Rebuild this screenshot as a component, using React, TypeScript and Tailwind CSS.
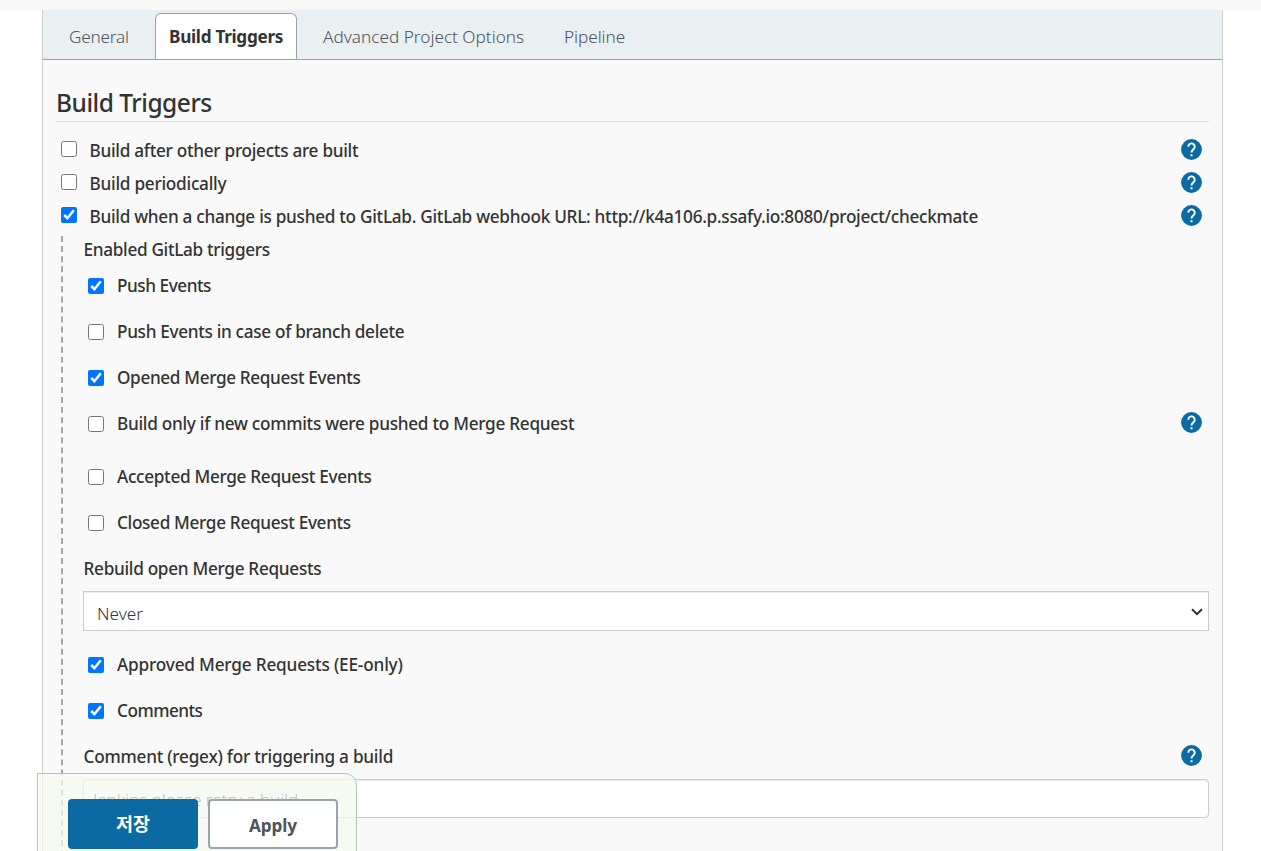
import type { ReactNode } from 'react';

function HelpIcon() {
  return (
    <svg viewBox="0 0 24 24" className="h-[25px] w-[25px] shrink-0" aria-hidden="true">
      <circle cx="12" cy="12" r="10" fill="#0b6aa2" />
      <path d="M8.9 9.3a3.1 3.1 0 1 1 5.3 2.1c-1.1 1.1-2.2 1.7-2.2 3.5" fill="none" stroke="#fff" strokeWidth="1.8" />
      <rect x="11.05" y="16.6" width="1.9" height="1.9" fill="#fff" />
    </svg>
  );
}

function Check({ checked = false }: { checked?: boolean }) {
  return <input type="checkbox" defaultChecked={checked} className="m-0 h-4 w-4 shrink-0" />;
}

type RowProps = { children: ReactNode; checked?: boolean; help?: boolean; track: string };

function OuterRow({ children, checked, help, track }: RowProps) {
  return (
    <div className="flex h-[33px] items-center pr-[5px] pl-[5px]">
      <div className="-mt-[2px] flex"><Check checked={checked} /></div>
      <span className={'ml-[12.5px] flex-1 pt-[2px] ' + track}>{children}</span>
      {help && <HelpIcon />}
    </div>
  );
}

function InnerRow({ children, checked, help, track }: RowProps) {
  return (
    <div className="flex h-[46px] items-center pr-[5px] pl-[5px]">
      <Check checked={checked} />
      <span className={'ml-[13px] flex-1 ' + track}>{children}</span>
      {help && <div className="-mt-[3px]"><HelpIcon /></div>}
    </div>
  );
}

export default function App() {
  return (
    <div className="relative h-[851px] w-[1261px] overflow-hidden bg-white font-['Noto_Sans','Noto_Sans_CJK_KR',sans-serif] text-[17.2px] leading-6 font-medium whitespace-nowrap text-[#333]">
      <div className="h-[10px] bg-[#f8f8f8]" />
      <main className="ml-[42px] h-[841px] w-[1181px] border-x border-[#ccc] bg-[#f9f9f9]">
        <nav className="flex h-[50px] border-b border-[#98a4ad] bg-[#eaeff2] pt-[3px] font-light text-[#4d545d]">
          <span className="w-[112px] pt-[12px] pl-[26px] tracking-[-0.2px]">General</span>
          <span className="h-[46px] w-[142px] rounded-t-[6px] border border-b-0 border-[#98a4ad] bg-white pt-[11px] pl-[13px] font-bold tracking-[-0.3px] text-[#333]">Build Triggers</span>
          <span className="w-[241px] pt-[12px] pl-[26px]">Advanced Project Options</span>
          <span className="pt-[12px] pl-[26px] tracking-[-0.06px]">Pipeline</span>
        </nav>
        <div className="px-[13px]">
          <h1 className="h-[62px] border-b border-[#ddd] pt-[27px] text-[24.5px] leading-8 font-medium tracking-[-0.48px]">Build Triggers</h1>
          <div className="pt-[11px]">
            <OuterRow help track="tracking-[-0.28px]">Build after other projects are built</OuterRow>
            <OuterRow help track="tracking-[-0.25px]">Build periodically</OuterRow>
            <OuterRow checked help track="tracking-[-0.283px]">Build when a change is pushed to GitLab. GitLab webhook URL: http://k4a106.p.ssafy.io:8080/project/checkmate</OuterRow>
          </div>
          <section className="mt-[4px] ml-[5px] h-[620px] border-l-2 border-dashed border-[#a5a5a5] pl-[20px]">
            <div className="h-[27px] pt-[2px] pl-[0.5px] tracking-[-0.32px]">Enabled GitLab triggers</div>
            <InnerRow checked track="tracking-[-0.46px]">Push Events</InnerRow>
            <InnerRow track="tracking-[-0.32px]">Push Events in case of branch delete</InnerRow>
            <InnerRow checked track="tracking-[-0.36px]">Opened Merge Request Events</InnerRow>
            <InnerRow help track="tracking-[-0.275px]">Build only if new commits were pushed to Merge Request</InnerRow>
            <div className="h-[7px]" />
            <InnerRow track="tracking-[-0.31px]">Accepted Merge Request Events</InnerRow>
            <InnerRow track="tracking-[-0.33px]">Closed Merge Request Events</InnerRow>
            <div className="flex h-[45px] items-center pl-[0.5px] tracking-[-0.3px]">Rebuild open Merge Requests</div>
            <div className="flex h-[40px] items-center justify-between border border-[#ccc] bg-white pr-[5px] pl-[13px] shadow-[inset_0_1px_1px_rgba(0,0,0,0.075)]">
              <span className="pt-[6px] font-light">Never</span>
              <svg viewBox="0 0 12 8" className="mt-[2px] h-2 w-3"><path d="M1 1.2 6 6.2 11 1.2" fill="none" stroke="#333" strokeWidth="2" /></svg>
            </div>
            <div className="h-[11px]" />
            <InnerRow checked track="tracking-[-0.18px]">Approved Merge Requests (EE-only)</InnerRow>
            <InnerRow checked track="tracking-[-0.52px]">Comments</InnerRow>
            <div className="flex h-[45px] items-center justify-between pr-[5px] pl-[0.5px] tracking-[-0.24px]">
              <span>Comment (regex) for triggering a build</span>
              <div className="-mt-[3px]"><HelpIcon /></div>
            </div>
            <div className="flex h-[39px] items-center rounded-[4px] border border-[#ccc] bg-white pl-[9px] font-light tracking-[-0.1px] text-black shadow-[inset_0_1px_1px_rgba(0,0,0,0.075)]">
              <span className="pt-[3px]">Jenkins please retry a build</span>
            </div>
          </section>
        </div>
      </main>
      <footer className="absolute top-[773px] left-[37px] flex h-[90px] w-[320px] gap-[10px] rounded-tr-[12px] border border-[#a5cdb9] bg-[#f5f9ef]/75 pt-[25px] pl-[30px] font-bold">
        <button className="h-[50px] w-[130px] rounded-[4px] bg-[#0b6aa2] text-[18.5px] text-white">저장</button>
        <button className="h-[50px] w-[130px] rounded-[4px] border-2 border-[#98a4ad] bg-white pt-[3px] tracking-[-0.1px] text-[#4d545d]">Apply</button>
      </footer>
    </div>
  );
}
